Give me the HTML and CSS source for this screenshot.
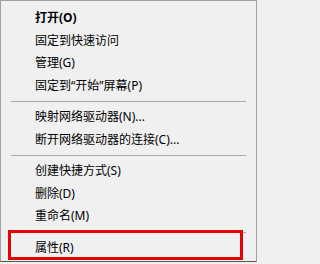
FILE: index.html
```html
<!DOCTYPE html>
<html lang="zh-CN">
<head>
<meta charset="utf-8">
<link rel="stylesheet" href="styles.css">
</head>
<body>
<div class="menu">
  <div class="item bold">打开(O)</div>
  <div class="item">固定到快速访问</div>
  <div class="item">管理(G)</div>
  <div class="item">固定到“开始”屏幕(P)</div>
  <div class="sep"></div>
  <div class="item">映射网络驱动器(N)...</div>
  <div class="item">断开网络驱动器的连接(C)...</div>
  <div class="sep"></div>
  <div class="item">创建快捷方式(S)</div>
  <div class="item">删除(D)</div>
  <div class="item">重命名(M)</div>
  <div class="sep"></div>
  <div class="item">属性(R)</div>
  <div class="highlight"></div>
</div>
</body>
</html>
```

FILE: styles.css
```css
html, body {
  margin: 0;
  padding: 0;
  background: #f0f0f0;
}
body {
  width: 259px;
  height: 264px;
  overflow: hidden;
  font-family: "Noto Sans", "Noto Sans CJK SC", sans-serif;
  font-size: 12px;
  color: #000;
}
.menu {
  position: relative;
  box-sizing: border-box;
  width: 257px;
  height: 262px;
  background: #f0f0f0;
  border: 1px solid #a0a0a0;
  border-bottom-color: #555;
  padding: 6px 2px 0 2px;
}
.item {
  height: 22.5px;
  line-height: 22.5px;
  padding-left: 32px;
  white-space: nowrap;
}
.bold {
  font-weight: bold;
}
.sep {
  height: 9px;
  margin: 0 8px 0 8px;
  position: relative;
}
.sep::after {
  content: "";
  position: absolute;
  left: 0;
  right: 0;
  top: 4px;
  height: 1px;
  background: #a9a9a9;
}
.highlight {
  position: absolute;
  left: 7px;
  top: 229px;
  width: 235px;
  height: 30px;
  box-sizing: border-box;
  border: 3px solid #e60000;
}
```
